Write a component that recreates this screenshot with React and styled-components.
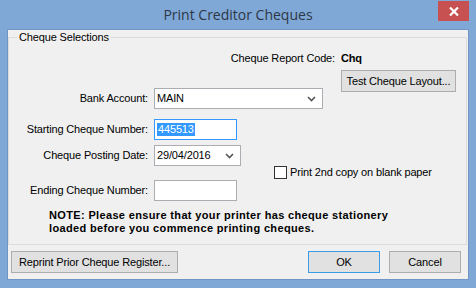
import React from "react";
import styled, { createGlobalStyle } from "styled-components";

const Global = createGlobalStyle`
  html, body { margin: 0; padding: 0; }
  body { width: 476px; height: 288px; overflow: hidden; background: #80a8d6; }
  * { box-sizing: border-box; }
`;

const Window = styled.div`
  width: 476px;
  height: 288px;
  background: #80a8d6;
  display: flex;
  flex-direction: column;
  font-family: "Liberation Sans", Arial, sans-serif;
  font-size: 11px;
  letter-spacing: -0.15px;
  color: #000;
`;

const TitleBar = styled.div`
  position: relative;
  height: 30px;
  flex: none;
  display: flex;
  align-items: center;
  justify-content: center;
  padding-bottom: 1px;
`;

const Title = styled.div`
  font-family: "Open Sans", "Noto Sans", sans-serif;
  font-size: 14px;
  letter-spacing: 0;
  color: #2c3747;
`;

const CloseButton = styled.div`
  position: absolute;
  top: 1px;
  right: 7px;
  width: 31px;
  height: 20px;
  background: #c75050;
  display: flex;
  align-items: center;
  justify-content: center;
`;

const Client = styled.div`
  flex: 1;
  margin: 0 8px 9px 8px;
  background: #f0f0f0;
  display: flex;
  flex-direction: column;
  box-shadow: 0 0 0 1px #7196c6;
`;

const Group = styled.div`
  position: relative;
  margin: 7px 1px 0 0;
  height: 208px;
  border: 1px solid #dcdcdc;
`;

const Legend = styled.div`
  position: absolute;
  top: -8px;
  left: 8px;
  padding: 0 2px;
  background: #f0f0f0;
  line-height: 14px;
`;

const Form = styled.div`
  display: grid;
  padding-top: 13px;
  grid-template-columns: 139px 6px 87px 33px 67px 115px 1fr;
  grid-template-rows: 15px 4px 18px 4px 17px 10px 21px 5px 21px 14px 21px 8px 27px;
`;

const Cell = styled.div`
  grid-row: ${(p) => p.$row};
  grid-column: ${(p) => p.$col};
  display: flex;
  align-items: ${(p) => p.$align || "center"};
  justify-content: ${(p) => p.$justify || "flex-start"};
  padding-right: ${(p) => p.$pr || 0}px;
  white-space: nowrap;
`;

const Label = styled.span`
  line-height: 13px;
`;

const Strong = styled.span`
  font-weight: bold;
  line-height: 13px;
`;

const Field = styled.div`
  width: ${(p) => p.$w}px;
  height: 21px;
  background: #fff;
  border: 1px solid ${(p) => (p.$focus ? "#3399ff" : "#abadb3")};
  display: flex;
  align-items: center;
  padding: 0 6px 0 2px;
  justify-content: space-between;
`;

const Selected = styled.span`
  background: #3399ff;
  color: #fff;
  line-height: 13px;
  padding: 0 1px;
`;

const Button = styled.div`
  width: ${(p) => p.$w}px;
  height: 22px;
  background: #e1e1e1;
  border: 1px solid ${(p) => (p.$default ? "#3c9be6" : "#adadad")};
  display: flex;
  align-items: center;
  justify-content: center;
  line-height: 13px;
`;

const Check = styled.div`
  width: 13px;
  height: 13px;
  border: 1px solid #333;
  background: #fff;
  margin-right: 3px;
  flex: none;
`;

const Note = styled.div`
  padding-left: 40px;
  font-weight: bold;
  line-height: 13px;
  letter-spacing: 0.35px;
`;

const ButtonBar = styled.div`
  display: flex;
  justify-content: space-between;
  padding: 6px 7px 0 3px;
`;

const ButtonGroup = styled.div`
  display: flex;
  gap: 9px;
`;

const Chevron = () => (
  <svg width="9" height="6" viewBox="0 0 9 6">
    <polyline points="1,1 4.5,4.5 8,1" fill="none" stroke="#555" strokeWidth="1.6" />
  </svg>
);

export default function App() {
  return (
    <>
      <Global />
      <Window>
        <TitleBar>
          <Title>Print Creditor Cheques</Title>
          <CloseButton>
            <svg width="10" height="9" viewBox="0 0 10 9">
              <path d="M1 0.5 L9 8.5 M9 0.5 L1 8.5" stroke="#fff" strokeWidth="2.2" />
            </svg>
          </CloseButton>
        </TitleBar>
        <Client>
          <Group>
            <Legend>Cheque Selections</Legend>
            <Form>
              <Cell $row="1 / 2" $col="1 / 6" $justify="flex-end" $pr={6}>
                <Label>Cheque Report Code:</Label>
              </Cell>
              <Cell $row="1 / 2" $col="6 / 8">
                <Strong>Chq</Strong>
              </Cell>
              <Cell $row="3 / 5" $col="6 / 7" $align="flex-start">
                <Button $w={115}>Test Cheque Layout...</Button>
              </Cell>
              <Cell $row="4 / 6" $col="1 / 2" $justify="flex-end">
                <Label>Bank Account:</Label>
              </Cell>
              <Cell $row="4 / 6" $col="3 / 7">
                <Field $w={169}>
                  <Label>MAIN</Label>
                  <Chevron />
                </Field>
              </Cell>
              <Cell $row="7 / 8" $col="1 / 2" $justify="flex-end">
                <Label>Starting Cheque Number:</Label>
              </Cell>
              <Cell $row="7 / 8" $col="3 / 5">
                <Field $w={83} $focus>
                  <Selected>445513</Selected>
                </Field>
              </Cell>
              <Cell $row="9 / 10" $col="1 / 2" $justify="flex-end">
                <Label>Cheque Posting Date:</Label>
              </Cell>
              <Cell $row="9 / 10" $col="3 / 5">
                <Field $w={87}>
                  <Label>29/04/2016</Label>
                  <Chevron />
                </Field>
              </Cell>
              <Cell $row="10 / 11" $col="5 / 8" $align="flex-start">
                <Check />
                <Label>Print 2nd copy on blank paper</Label>
              </Cell>
              <Cell $row="11 / 12" $col="1 / 2" $justify="flex-end">
                <Label>Ending Cheque Number:</Label>
              </Cell>
              <Cell $row="11 / 12" $col="3 / 5">
                <Field $w={83} />
              </Cell>
              <Cell $row="13 / 14" $col="1 / 8" $align="flex-start">
                <Note>
                  NOTE: Please ensure that your printer has cheque stationery
                  <br />
                  loaded before you commence printing cheques.
                </Note>
              </Cell>
            </Form>
          </Group>
          <ButtonBar>
            <Button $w={167}>Reprint Prior Cheque Register...</Button>
            <ButtonGroup>
              <Button $w={72} $default>OK</Button>
              <Button $w={72}>Cancel</Button>
            </ButtonGroup>
          </ButtonBar>
        </Client>
      </Window>
    </>
  );
}
